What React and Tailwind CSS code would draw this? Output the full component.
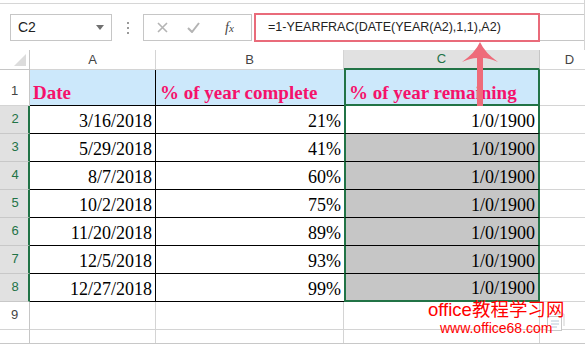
import { Fragment } from "react"

const sans = { fontFamily: '"Liberation Sans", Arial, sans-serif' }
const serif = { fontFamily: '"Liberation Serif", "Times New Roman", serif' }

const rows = [
  ["3/16/2018", "21%"],
  ["5/29/2018", "41%"],
  ["8/7/2018", "60%"],
  ["10/2/2018", "75%"],
  ["11/20/2018", "89%"],
  ["12/5/2018", "93%"],
  ["12/27/2018", "99%"],
]

function Toolbar() {
  return (
    <div className="h-[50px] pt-[3px] border-r border-[#d4d4d4]" style={sans}>
      <div className="h-full border-t border-[#d6d6d6] flex items-start pt-[10px]">
        {/* name box */}
        <div className="ml-[10px] w-[102px] h-[27px] border border-[#c6c6c6] flex items-center justify-between pl-[7px] pr-[7px]">
          <span className="text-[14px] text-[#222]">C2</span>
          <svg width="8" height="5" viewBox="0 0 8 5">
            <path d="M0 0H8L4 5Z" fill="#707070" />
          </svg>
        </div>
        {/* grip dots */}
        <div className="w-[31px] h-[27px] flex flex-col items-center justify-center gap-[3px]">
          <span className="w-[2px] h-[2px] bg-[#9a9a9a]" />
          <span className="w-[2px] h-[2px] bg-[#9a9a9a]" />
          <span className="w-[2px] h-[2px] bg-[#9a9a9a]" />
        </div>
        {/* cancel / enter / insert function */}
        <div className="w-[109px] h-[27px] border border-[#c6c6c6] flex items-center">
          <svg className="ml-[13px]" width="11" height="11" viewBox="0 0 11 11">
            <path d="M1 1L10 10M10 1L1 10" stroke="#b4b4b4" strokeWidth="1.6" />
          </svg>
          <svg className="ml-[19px]" width="13" height="11" viewBox="0 0 13 11">
            <path d="M1 6L5 10L12 1" stroke="#b4b4b4" strokeWidth="2" fill="none" />
          </svg>
          <span className="ml-[25px] text-[14px] italic text-[#444]" style={serif}>
            f<span className="text-[11px]">x</span>
          </span>
        </div>
        {/* formula input */}
        <div className="relative ml-[2px] flex-1 h-[27px] border-y border-l border-[#c6c6c6] flex items-center pl-[13px]">
          <span className="text-[12.5px] text-[#222] whitespace-nowrap">=1-YEARFRAC(DATE(YEAR(A2),1,1),A2)</span>
          <div className="absolute left-[-1px] top-[-2px] w-[286px] h-[29px] border-2 border-[#e96b7a]" />
        </div>
      </div>
    </div>
  )
}

function RowHead({ n, active, h }) {
  return (
    <div
      className={
        "flex items-end justify-center pb-[5px] text-[13px] border-b " +
        (active
          ? "bg-[#e1e1e1] text-[#217346] border-r-2 border-r-[#217346] border-b-[#c8c8c8] pl-[2px]"
          : "bg-white text-[#444] border-r border-r-[#c6c6c6] border-b-[#d4d4d4]") +
        " " + h
      }
      style={sans}
    >
      {n}
    </div>
  )
}

export default function App() {
  return (
    <div className="w-[585px] h-[344px] bg-white overflow-hidden relative">
      <Toolbar />

      <div className="grid grid-cols-[30px_126px_188px_196px_45px] grid-rows-[20px_36px_repeat(8,28px)_13px]">
        {/* column headers */}
        <div className="border-r border-b border-[#c6c6c6] relative">
          <svg className="absolute right-[3px] bottom-[3px]" width="12" height="12" viewBox="0 0 12 12">
            <path d="M12 0V12H0Z" fill="#dcdcdc" />
          </svg>
        </div>
        <div className="border-r border-b border-[#d4d4d4] flex items-center justify-center text-[13px] text-[#444]" style={sans}>A</div>
        <div className="border-r border-b border-[#d4d4d4] flex items-center justify-center text-[13px] text-[#444]" style={sans}>B</div>
        <div className="bg-[#e1e1e1] border-r border-[#c6c6c6] border-b-2 border-b-[#217346] flex items-center justify-center text-[13px] text-[#217346]" style={sans}>C</div>
        <div className="border-b border-[#d4d4d4] flex items-center justify-center pl-[14px] text-[13px] text-[#444]" style={sans}>D</div>

        {/* row 1 */}
        <RowHead n="1" h="" />
        <div className="bg-[#cce8fb] border-r border-b border-black flex items-end pl-[3px] pb-[3px] text-[19px] font-bold text-[#f5126b] leading-none whitespace-nowrap" style={serif}>Date</div>
        <div className="bg-[#cce8fb] border-b border-black flex items-end pl-[4px] pb-[3px] text-[19px] font-bold text-[#f5126b] leading-none whitespace-nowrap" style={serif}>% of year complete</div>
        <div className="bg-[#cce8fb] border-x-2 border-x-[#217346] border-b-2 border-b-[#217346] flex items-end pl-[3px] pb-[2px] text-[19px] font-bold text-[#f5126b] leading-none whitespace-nowrap" style={serif}>% of year remaining</div>
        <div className="border-b border-[#d4d4d4]" />

        {/* rows 2-8 */}
        {rows.map(([date, pct], i) => {
          const last = i === rows.length - 1
          return (
            <Fragment key={date}>
              <RowHead n={i + 2} active />
              <div className="border-r border-b border-black flex items-end justify-end pr-[3px] pb-[3px] text-[18px] leading-none text-black" style={serif}>{date}</div>
              <div className="border-b border-black flex items-end justify-end pr-[3px] pb-[3px] text-[18px] leading-none text-black" style={serif}>{pct}</div>
              <div
                className={
                  "border-x-2 border-x-[#217346] flex items-end justify-end pr-[3px] pb-[3px] text-[18px] leading-none text-black " +
                  (i === 0 ? "bg-white " : "bg-[#c6c6c6] ") +
                  (last ? "border-b-2 border-b-[#217346]" : "border-b border-b-black")
                }
                style={serif}
              >
                1/0/1900
              </div>
              <div className="border-b border-[#d4d4d4]" />
            </Fragment>
          )
        })}

        {/* row 9 */}
        <RowHead n="9" h="" />
        <div className="border-r border-b border-[#d4d4d4]" />
        <div className="border-r border-b border-[#d4d4d4]" />
        <div className="border-r border-b border-[#d4d4d4]" />
        <div className="border-b border-[#d4d4d4]" />

        {/* row 10 (cut off) */}
        <div className="border-r border-[#c6c6c6]" />
        <div className="border-r border-[#d4d4d4]" />
        <div className="border-r border-[#d4d4d4]" />
        <div className="border-r border-[#d4d4d4]" />
        <div />
      </div>
      <div className="h-[2px] bg-[#c8c8c8]" />

      {/* callout arrow from the formula bar down to C1 */}
      <svg className="absolute left-[460px] top-[40px]" width="40" height="68" viewBox="0 0 40 68">
        <path d="M20 2Q15 13 2 22Q11 18 17 18L17 66L23 66L23 18Q29 18 38 22Q25 13 20 2Z" fill="#ee6b7a" />
      </svg>

      {/* quick analysis button */}
      <svg className="absolute left-[546px] top-[313px]" width="20" height="18" viewBox="0 0 20 18">
        <rect x="1.5" y="3.5" width="14" height="14" fill="#fff" stroke="#c8c8c8" />
        <path d="M8 1h10v12" stroke="#d0d0d0" fill="none" />
        <path d="M5 8h8M5 11h8M5 14h6" stroke="#b8c8d8" />
      </svg>

      {/* site stamp */}
      <div className="absolute left-[428px] top-[301px] flex flex-col items-center leading-none text-[#ff0000]" style={{ fontFamily: '"Liberation Sans", "Noto Sans CJK SC", sans-serif' }}>
        <span className="text-[18.5px] whitespace-nowrap">office教程学习网</span>
        <span className="mt-[1px] text-[14px] whitespace-nowrap">www.office68.com</span>
      </div>
    </div>
  )
}
